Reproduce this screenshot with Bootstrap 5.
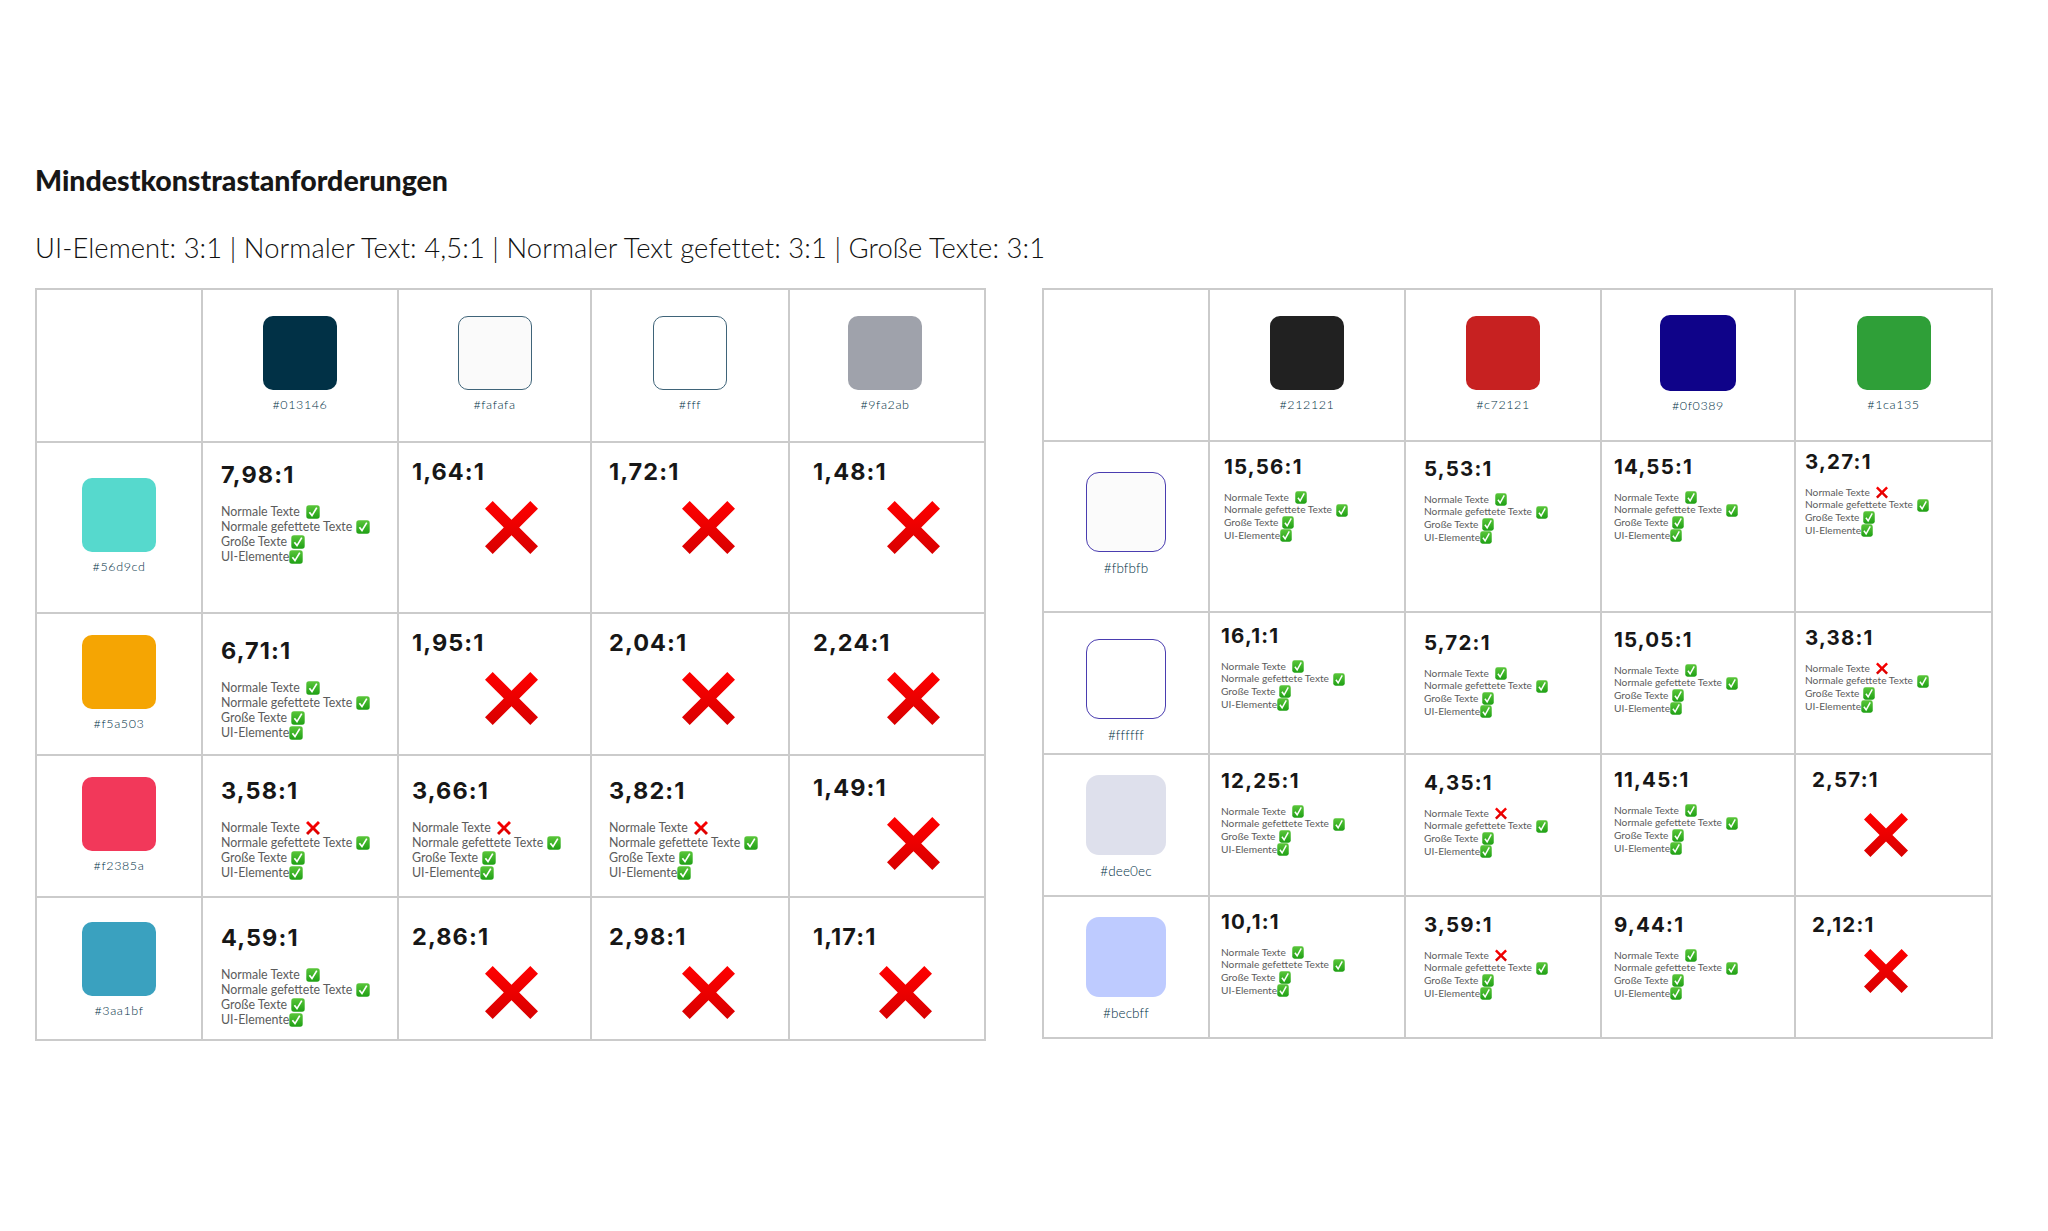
<!DOCTYPE html>
<html lang="de">
<head>
<meta charset="utf-8">
<title>Mindestkonstrastanforderungen</title>
<link href="https://cdn.jsdelivr.net/npm/bootstrap@5.3.0/dist/css/bootstrap.min.css" rel="stylesheet">
<style>
body{background:#fff;font-family:"Lato","Liberation Sans",sans-serif;color:#1a1a1a}
.page-wrap{padding:163px 0 0 35px}
.main-title{font-family:"Lato",sans-serif;font-weight:900;font-size:28.5px;line-height:34px;margin:0 0 34px;color:#171717}
.sub-title{font-weight:300;font-size:27.4px;line-height:34px;margin:0 0 23px;color:#111;letter-spacing:.07px}
.tables-row{gap:56px}
.ktab{table-layout:fixed;margin:0;--bs-table-border-color:#cbcbcb;border-color:#cbcbcb;flex:none}
.ktab td{padding:0;vertical-align:top;border-width:2px}
.kl{width:949px}.kr{width:949px}
.kl col:nth-child(1){width:166px}.kl col:nth-child(2){width:196px}.kl col:nth-child(3){width:193px}.kl col:nth-child(4){width:198px}.kl col:nth-child(5){width:196px}
.kr col:nth-child(1){width:166px}.kr col:nth-child(2){width:196px}.kr col:nth-child(3){width:196px}.kr col:nth-child(4){width:194px}.kr col:nth-child(5){width:197px}
.kl tr:nth-child(1){height:153px}.kl tr:nth-child(2){height:171px}.kl tr:nth-child(3){height:142px}.kl tr:nth-child(4){height:142px}.kl tr:nth-child(5){height:143px}
.kr tr:nth-child(1){height:152px}.kr tr:nth-child(2){height:171px}.kr tr:nth-child(3){height:142px}.kr tr:nth-child(4){height:142px}.kr tr:nth-child(5){height:142px}
.kl td:nth-child(2){padding-left:18px}.kl td:nth-child(3){padding-left:13px}.kl td:nth-child(4){padding-left:17px}.kl td:nth-child(5){padding-left:23px}
.kr td:nth-child(2){padding-left:14px}.kr td:nth-child(3){padding-left:18px}.kr td:nth-child(4){padding-left:12px}.kr td:nth-child(5){padding-left:9px}
.ktab td.lp11{padding-left:11px}.ktab td.lp16{padding-left:16px}
td.tp8{padding-top:8px}td.tp11{padding-top:11px}td.tp13{padding-top:13px}td.tp14{padding-top:14px}td.tp15{padding-top:15px}td.tp16{padding-top:16px}td.tp17{padding-top:17px}td.tp18{padding-top:18px}td.tp20{padding-top:20px}td.tp21{padding-top:21px}td.tp23{padding-top:23px}td.tp24{padding-top:24px}td.tp25{padding-top:25px}td.tp26{padding-top:26px}td.tp27{padding-top:27px}td.tp28{padding-top:28px}td.tp30{padding-top:30px}td.tp35{padding-top:35px}
.ktab td.swatch-cell{padding-left:0}
.swatch{width:74px;height:74px;border-radius:10px}
.kr .row-head .swatch{width:80px;height:80px;border-radius:13px}
.hex{font-weight:300;font-size:12.5px;line-height:16px;margin-top:7px;color:#013146;letter-spacing:.6px}
.kr .row-head .hex{font-size:13.5px;margin-top:8px;letter-spacing:.1px}
.s-013146{background:#013146}.s-fafafa{background:#fafafa;border:1px solid #3f6479}.s-fff{background:#fff;border:1px solid #3f6479}.s-9fa2ab{background:#9fa2ab}
.s-212121{background:#212121}.s-c72121{background:#c72121}.kr .s-0f0389{background:#0f0389;width:76px;height:76px;margin-top:-1px}.s-1ca135{background:#2f9f38}
.s-56d9cd{background:#56d9cd}.s-f5a503{background:#f5a503}.s-f2385a{background:#f2385a}.s-3aa1bf{background:#3aa1bf}
.s-fbfbfb{background:#fbfbfb;border:1.5px solid #4a3db0}.s-ffffff{background:#fff;border:1.5px solid #4a3db0}.s-dee0ec{background:#dee0ec}.s-becbff{background:#becbff}
.ratio{font-family:"Inter",sans-serif;font-weight:700;color:#171717;line-height:24px;white-space:nowrap}
.kl .ratio{font-size:23.5px;letter-spacing:1.1px;margin-bottom:16.5px}
.kr .ratio{font-size:20.5px;letter-spacing:1.2px;margin-bottom:11.6px}
.ln{white-space:nowrap;color:#5c5c5c;font-weight:400}
.kl .ln{font-size:12.4px;line-height:15.2px}
.kr .ln{font-size:10.2px;line-height:12.7px}
.ln svg{vertical-align:middle}
.kl .ln svg{width:14px;height:14px;margin-top:-3px;margin-bottom:-2px}
.kr .ln svg{width:12px;height:13px;margin-top:-3px;margin-bottom:-2px}
.ln:nth-child(1) svg{margin-left:8px}.ln:nth-child(2) svg{margin-left:6px}.ln:nth-child(3) svg{margin-left:4px}.ln:nth-child(4) svg{margin-left:4px}
.big-x{display:block;width:53px;height:53px;margin:13px 0 0 73px}
.big-x.shift{margin-left:65px}
.kl td:nth-child(5) .big-x{margin-left:74px}
.kl td:nth-child(5) .big-x.shift{margin-left:66px}
.big-x.mid{width:44px;height:44px;margin:21px 0 0 52px}
.big-x.mid.lift{margin-top:11px}
</style>
</head>
<body>
<svg width="0" height="0" class="position-absolute" aria-hidden="true">
  <defs>
    <linearGradient id="redg" x1="0" y1="0" x2="0" y2="1"><stop offset="0" stop-color="#ff0000"/><stop offset="1" stop-color="#d80000"/></linearGradient>
    <linearGradient id="greeng" x1="0" y1="0" x2="0" y2="1"><stop offset="0" stop-color="#5ac63a"/><stop offset="1" stop-color="#1fa015"/></linearGradient>
    <symbol id="no" viewBox="0 0 53 53"><polygon fill="url(#redg)" points="7.7,0 26.5,18.8 45.3,0 53,7.7 34.2,26.5 53,45.3 45.3,53 26.5,34.2 7.7,53 0,45.3 18.8,26.5 0,7.7"/></symbol>
    <symbol id="ok" viewBox="0 0 14 14" preserveAspectRatio="none"><rect x=".3" y=".3" width="13.4" height="13.4" rx="2.6" fill="url(#greeng)"/><path d="M3.4 7.2 6 10.6 10.8 2.6" fill="none" stroke="#fff" stroke-width="1.7"/></symbol>
  </defs>
</svg>
<main class="page-wrap">
  <h1 class="main-title">Mindestkonstrastanforderungen</h1>
  <p class="sub-title">UI-Element: 3:1 | Normaler Text: 4,5:1 | Normaler Text gefettet: 3:1 | Große Texte: 3:1</p>
  <div class="d-flex align-items-start tables-row">

    <table class="table table-bordered ktab kl">
      <colgroup><col><col><col><col><col></colgroup>
      <tbody>
        <tr>
          <td></td>
          <td class="swatch-cell tp26"><div class="d-flex flex-column align-items-center"><div class="swatch s-013146"></div><div class="hex">#013146</div></div></td>
          <td class="swatch-cell tp26"><div class="d-flex flex-column align-items-center"><div class="swatch s-fafafa"></div><div class="hex">#fafafa</div></div></td>
          <td class="swatch-cell tp26"><div class="d-flex flex-column align-items-center"><div class="swatch s-fff"></div><div class="hex">#fff</div></div></td>
          <td class="swatch-cell tp26"><div class="d-flex flex-column align-items-center pe-1"><div class="swatch s-9fa2ab"></div><div class="hex">#9fa2ab</div></div></td>
        </tr>
        <tr>
          <td class="row-head tp35"><div class="d-flex flex-column align-items-center"><div class="swatch s-56d9cd"></div><div class="hex">#56d9cd</div></div></td>
          <td class="tp20"><div class="ratio">7,98:1</div>
            <div class="ln">Normale Texte<svg><use href="#ok"/></svg></div><div class="ln">Normale gefettete Texte<svg><use href="#ok"/></svg></div><div class="ln">Große Texte<svg><use href="#ok"/></svg></div><div class="ln">UI-Elemente<svg><use href="#ok"/></svg></div></td>
          <td class="tp17"><div class="ratio">1,64:1</div><svg class="big-x"><use href="#no"/></svg></td>
          <td class="tp17"><div class="ratio">1,72:1</div><svg class="big-x"><use href="#no"/></svg></td>
          <td class="tp17"><div class="ratio">1,48:1</div><svg class="big-x"><use href="#no"/></svg></td>
        </tr>
        <tr>
          <td class="row-head tp21"><div class="d-flex flex-column align-items-center"><div class="swatch s-f5a503"></div><div class="hex">#f5a503</div></div></td>
          <td class="tp25"><div class="ratio">6,71:1</div>
            <div class="ln">Normale Texte<svg><use href="#ok"/></svg></div><div class="ln">Normale gefettete Texte<svg><use href="#ok"/></svg></div><div class="ln">Große Texte<svg><use href="#ok"/></svg></div><div class="ln">UI-Elemente<svg><use href="#ok"/></svg></div></td>
          <td class="tp17"><div class="ratio">1,95:1</div><svg class="big-x"><use href="#no"/></svg></td>
          <td class="tp17"><div class="ratio">2,04:1</div><svg class="big-x"><use href="#no"/></svg></td>
          <td class="tp17"><div class="ratio">2,24:1</div><svg class="big-x"><use href="#no"/></svg></td>
        </tr>
        <tr>
          <td class="row-head tp21"><div class="d-flex flex-column align-items-center"><div class="swatch s-f2385a"></div><div class="hex">#f2385a</div></div></td>
          <td class="tp23"><div class="ratio">3,58:1</div>
            <div class="ln">Normale Texte<svg><use href="#no"/></svg></div><div class="ln">Normale gefettete Texte<svg><use href="#ok"/></svg></div><div class="ln">Große Texte<svg><use href="#ok"/></svg></div><div class="ln">UI-Elemente<svg><use href="#ok"/></svg></div></td>
          <td class="tp23"><div class="ratio">3,66:1</div>
            <div class="ln">Normale Texte<svg><use href="#no"/></svg></div><div class="ln">Normale gefettete Texte<svg><use href="#ok"/></svg></div><div class="ln">Große Texte<svg><use href="#ok"/></svg></div><div class="ln">UI-Elemente<svg><use href="#ok"/></svg></div></td>
          <td class="tp23"><div class="ratio">3,82:1</div>
            <div class="ln">Normale Texte<svg><use href="#no"/></svg></div><div class="ln">Normale gefettete Texte<svg><use href="#ok"/></svg></div><div class="ln">Große Texte<svg><use href="#ok"/></svg></div><div class="ln">UI-Elemente<svg><use href="#ok"/></svg></div></td>
          <td class="tp20"><div class="ratio">1,49:1</div><svg class="big-x"><use href="#no"/></svg></td>
        </tr>
        <tr>
          <td class="row-head tp24"><div class="d-flex flex-column align-items-center"><div class="swatch s-3aa1bf"></div><div class="hex">#3aa1bf</div></div></td>
          <td class="tp28"><div class="ratio">4,59:1</div>
            <div class="ln">Normale Texte<svg><use href="#ok"/></svg></div><div class="ln">Normale gefettete Texte<svg><use href="#ok"/></svg></div><div class="ln">Große Texte<svg><use href="#ok"/></svg></div><div class="ln">UI-Elemente<svg><use href="#ok"/></svg></div></td>
          <td class="tp27"><div class="ratio">2,86:1</div><svg class="big-x"><use href="#no"/></svg></td>
          <td class="tp27"><div class="ratio">2,98:1</div><svg class="big-x"><use href="#no"/></svg></td>
          <td class="tp27"><div class="ratio">1,17:1</div><svg class="big-x shift"><use href="#no"/></svg></td>
        </tr>
      </tbody>
    </table>

    <table class="table table-bordered ktab kr">
      <colgroup><col><col><col><col><col></colgroup>
      <tbody>
        <tr>
          <td></td>
          <td class="swatch-cell tp26"><div class="d-flex flex-column align-items-center"><div class="swatch s-212121"></div><div class="hex">#212121</div></div></td>
          <td class="swatch-cell tp26"><div class="d-flex flex-column align-items-center"><div class="swatch s-c72121"></div><div class="hex">#c72121</div></div></td>
          <td class="swatch-cell tp26"><div class="d-flex flex-column align-items-center"><div class="swatch s-0f0389"></div><div class="hex">#0f0389</div></div></td>
          <td class="swatch-cell tp26"><div class="d-flex flex-column align-items-center"><div class="swatch s-1ca135"></div><div class="hex">#1ca135</div></div></td>
        </tr>
        <tr>
          <td class="row-head tp30"><div class="d-flex flex-column align-items-center"><div class="swatch s-fbfbfb"></div><div class="hex">#fbfbfb</div></div></td>
          <td class="tp13"><div class="ratio">15,56:1</div>
            <div class="ln">Normale Texte<svg><use href="#ok"/></svg></div><div class="ln">Normale gefettete Texte<svg><use href="#ok"/></svg></div><div class="ln">Große Texte<svg><use href="#ok"/></svg></div><div class="ln">UI-Elemente<svg><use href="#ok"/></svg></div></td>
          <td class="tp15"><div class="ratio">5,53:1</div>
            <div class="ln">Normale Texte<svg><use href="#ok"/></svg></div><div class="ln">Normale gefettete Texte<svg><use href="#ok"/></svg></div><div class="ln">Große Texte<svg><use href="#ok"/></svg></div><div class="ln">UI-Elemente<svg><use href="#ok"/></svg></div></td>
          <td class="tp13"><div class="ratio">14,55:1</div>
            <div class="ln">Normale Texte<svg><use href="#ok"/></svg></div><div class="ln">Normale gefettete Texte<svg><use href="#ok"/></svg></div><div class="ln">Große Texte<svg><use href="#ok"/></svg></div><div class="ln">UI-Elemente<svg><use href="#ok"/></svg></div></td>
          <td class="tp8"><div class="ratio">3,27:1</div>
            <div class="ln">Normale Texte<svg><use href="#no"/></svg></div><div class="ln">Normale gefettete Texte<svg><use href="#ok"/></svg></div><div class="ln">Große Texte<svg><use href="#ok"/></svg></div><div class="ln">UI-Elemente<svg><use href="#ok"/></svg></div></td>
        </tr>
        <tr>
          <td class="row-head tp26"><div class="d-flex flex-column align-items-center"><div class="swatch s-ffffff"></div><div class="hex">#ffffff</div></div></td>
          <td class="tp11 lp11"><div class="ratio">16,1:1</div>
            <div class="ln">Normale Texte<svg><use href="#ok"/></svg></div><div class="ln">Normale gefettete Texte<svg><use href="#ok"/></svg></div><div class="ln">Große Texte<svg><use href="#ok"/></svg></div><div class="ln">UI-Elemente<svg><use href="#ok"/></svg></div></td>
          <td class="tp18"><div class="ratio">5,72:1</div>
            <div class="ln">Normale Texte<svg><use href="#ok"/></svg></div><div class="ln">Normale gefettete Texte<svg><use href="#ok"/></svg></div><div class="ln">Große Texte<svg><use href="#ok"/></svg></div><div class="ln">UI-Elemente<svg><use href="#ok"/></svg></div></td>
          <td class="tp15"><div class="ratio">15,05:1</div>
            <div class="ln">Normale Texte<svg><use href="#ok"/></svg></div><div class="ln">Normale gefettete Texte<svg><use href="#ok"/></svg></div><div class="ln">Große Texte<svg><use href="#ok"/></svg></div><div class="ln">UI-Elemente<svg><use href="#ok"/></svg></div></td>
          <td class="tp13"><div class="ratio">3,38:1</div>
            <div class="ln">Normale Texte<svg><use href="#no"/></svg></div><div class="ln">Normale gefettete Texte<svg><use href="#ok"/></svg></div><div class="ln">Große Texte<svg><use href="#ok"/></svg></div><div class="ln">UI-Elemente<svg><use href="#ok"/></svg></div></td>
        </tr>
        <tr>
          <td class="row-head tp20"><div class="d-flex flex-column align-items-center"><div class="swatch s-dee0ec"></div><div class="hex">#dee0ec</div></div></td>
          <td class="tp14 lp11"><div class="ratio">12,25:1</div>
            <div class="ln">Normale Texte<svg><use href="#ok"/></svg></div><div class="ln">Normale gefettete Texte<svg><use href="#ok"/></svg></div><div class="ln">Große Texte<svg><use href="#ok"/></svg></div><div class="ln">UI-Elemente<svg><use href="#ok"/></svg></div></td>
          <td class="tp16"><div class="ratio">4,35:1</div>
            <div class="ln">Normale Texte<svg><use href="#no"/></svg></div><div class="ln">Normale gefettete Texte<svg><use href="#ok"/></svg></div><div class="ln">Große Texte<svg><use href="#ok"/></svg></div><div class="ln">UI-Elemente<svg><use href="#ok"/></svg></div></td>
          <td class="tp13"><div class="ratio">11,45:1</div>
            <div class="ln">Normale Texte<svg><use href="#ok"/></svg></div><div class="ln">Normale gefettete Texte<svg><use href="#ok"/></svg></div><div class="ln">Große Texte<svg><use href="#ok"/></svg></div><div class="ln">UI-Elemente<svg><use href="#ok"/></svg></div></td>
          <td class="tp13 lp16"><div class="ratio">2,57:1</div><svg class="big-x mid"><use href="#no"/></svg></td>
        </tr>
        <tr>
          <td class="row-head tp20"><div class="d-flex flex-column align-items-center"><div class="swatch s-becbff"></div><div class="hex">#becbff</div></div></td>
          <td class="tp13 lp11"><div class="ratio">10,1:1</div>
            <div class="ln">Normale Texte<svg><use href="#ok"/></svg></div><div class="ln">Normale gefettete Texte<svg><use href="#ok"/></svg></div><div class="ln">Große Texte<svg><use href="#ok"/></svg></div><div class="ln">UI-Elemente<svg><use href="#ok"/></svg></div></td>
          <td class="tp16"><div class="ratio">3,59:1</div>
            <div class="ln">Normale Texte<svg><use href="#no"/></svg></div><div class="ln">Normale gefettete Texte<svg><use href="#ok"/></svg></div><div class="ln">Große Texte<svg><use href="#ok"/></svg></div><div class="ln">UI-Elemente<svg><use href="#ok"/></svg></div></td>
          <td class="tp16"><div class="ratio">9,44:1</div>
            <div class="ln">Normale Texte<svg><use href="#ok"/></svg></div><div class="ln">Normale gefettete Texte<svg><use href="#ok"/></svg></div><div class="ln">Große Texte<svg><use href="#ok"/></svg></div><div class="ln">UI-Elemente<svg><use href="#ok"/></svg></div></td>
          <td class="tp16 lp16"><div class="ratio">2,12:1</div><svg class="big-x mid lift"><use href="#no"/></svg></td>
        </tr>
      </tbody>
    </table>
  </div>
</main>
<script src="https://cdn.jsdelivr.net/npm/bootstrap@5.3.0/dist/js/bootstrap.bundle.min.js"></script>
</body>
</html>
